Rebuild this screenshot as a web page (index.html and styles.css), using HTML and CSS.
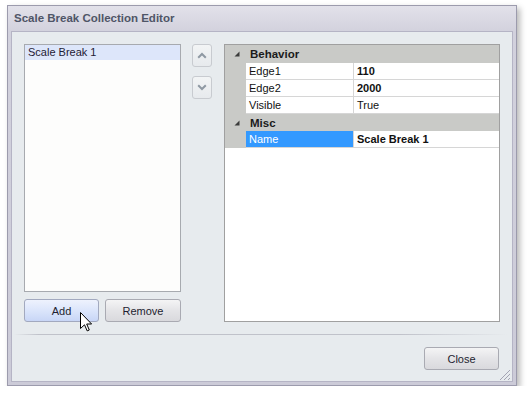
FILE: index.html
```html
<!DOCTYPE html>
<html>
<head>
<meta charset="utf-8">
<link rel="stylesheet" href="styles.css">
</head>
<body>
<div class="window">
  <div class="titlebar">Scale Break Collection Editor</div>
  <div class="client">
    <div class="main">
      <div class="left">
        <div class="list">
          <div class="item selected">Scale Break 1</div>
        </div>
        <div class="btnrow">
          <button class="btn hot add">Add</button>
          <button class="btn remove">Remove</button>
          <svg class="cursor" width="13" height="20" viewBox="0 0 13 20"><path d="M0.5 0.5 V16.5 L4.5 12.8 L7.2 18.9 L9.3 18 L6.7 12 H11.6 Z" fill="#fff" stroke="#000" stroke-width="1" stroke-linejoin="miter"/></svg>
        </div>
      </div>
      <div class="updown">
        <button class="arrow"><svg width="10" height="7" viewBox="0 0 10 7"><polyline points="1.2,5.8 5,2 8.8,5.8" fill="none" stroke="#8f99a3" stroke-width="2"/></svg></button>
        <button class="arrow"><svg width="10" height="7" viewBox="0 0 10 7"><polyline points="1.2,1.2 5,5 8.8,1.2" fill="none" stroke="#8f99a3" stroke-width="2"/></svg></button>
      </div>
      <div class="grid">
        <div class="cat"><span class="tri"><svg width="6" height="6" viewBox="0 0 6 6"><polygon points="0.5,5.5 5.5,5.5 5.5,0.5" fill="#3c3c3c"/></svg></span>Behavior</div>
        <div class="row"><div class="gut"></div><div class="name">Edge1</div><div class="val bold">110</div></div>
        <div class="row"><div class="gut"></div><div class="name">Edge2</div><div class="val bold">2000</div></div>
        <div class="row"><div class="gut"></div><div class="name">Visible</div><div class="val">True</div></div>
        <div class="cat"><span class="tri"><svg width="6" height="6" viewBox="0 0 6 6"><polygon points="0.5,5.5 5.5,5.5 5.5,0.5" fill="#3c3c3c"/></svg></span>Misc</div>
        <div class="row"><div class="gut"></div><div class="name sel">Name</div><div class="val bold">Scale Break 1</div></div>
      </div>
    </div>
    <div class="sep"></div>
    <div class="footer">
      <button class="btn close">Close</button>
    </div>
    <svg class="grip" width="12" height="12" viewBox="0 0 12 12">
      <g stroke="#a3a3b3" stroke-width="1">
        <line x1="11" y1="1" x2="1" y2="11"/>
        <line x1="11" y1="5" x2="5" y2="11"/>
        <line x1="11" y1="9" x2="9" y2="11"/>
      </g>
    </svg>
  </div>
</div>
</body>
</html>
```

FILE: styles.css
```css
body {
  margin: 0;
  background: #ffffff;
  font-family: "Liberation Sans", Arial, sans-serif;
  font-size: 11px;
}

.window {
  position: relative;
  margin: 5px 0 0 7px;
  width: 510px;
  height: 381px;
  box-sizing: border-box;
  border: 1px solid #9c9bad;
  background: linear-gradient(#e2e1ea, #d2d1dd 26px, #cccbd8);
  padding: 0 3px 3px 3px;
  display: flex;
  flex-direction: column;
  box-shadow: 3px 3px 6px rgba(0, 0, 0, 0.28);
}

.titlebar {
  height: 25px;
  line-height: 25px;
  padding-left: 3px;
  font-weight: bold;
  font-size: 11.5px;
  color: #4f5567;
}

.client {
  position: relative;
  flex: 1;
  border: 1px solid #b5b4c5;
  background: #e7ebee;
  padding: 12px 12px 11px 12px;
  display: flex;
  flex-direction: column;
}

.main {
  display: flex;
  height: 278px;
}

.left {
  width: 157px;
  display: flex;
  flex-direction: column;
  gap: 7px;
}

.list {
  height: 248px;
  box-sizing: border-box;
  border: 1px solid #a7aaaf;
  background: #fdfdfc;
}

.item {
  height: 15px;
  line-height: 15px;
  padding-left: 3px;
  color: #1f2035;
}

.item.selected {
  background: #dde6fa;
}

.btnrow {
  position: relative;
  display: flex;
  gap: 6px;
  height: 23px;
}

.btn {
  box-sizing: border-box;
  height: 23px;
  border: 1px solid #a9aab2;
  border-radius: 3px;
  background: linear-gradient(#f4f4f5, #e4e4e7 50%, #d9d9dd);
  font-family: "Liberation Sans", Arial, sans-serif;
  font-size: 11px;
  color: #1e1e30;
  padding: 0;
}

.btn.add {
  width: 75px;
}

.btn.remove {
  width: 76px;
}

.btn.hot {
  background: linear-gradient(#eef2fd, #dbe5fb 50%, #c8d6f6);
  border-color: #a2a9bf;
}

.cursor {
  position: absolute;
  left: 56px;
  top: 13px;
}

.updown {
  width: 20px;
  margin-left: 11px;
  margin-right: 12px;
  display: flex;
  flex-direction: column;
  gap: 9px;
}

.arrow {
  box-sizing: border-box;
  width: 20px;
  height: 23px;
  border: 1px solid #c8cbd0;
  border-radius: 3px;
  background: linear-gradient(#f2f4f5, #e7eaed);
  display: flex;
  align-items: center;
  justify-content: center;
  padding: 0;
}

.grid {
  width: 276px;
  box-sizing: border-box;
  border: 1px solid #a0a0a0;
  background: #ffffff;
}

.cat {
  height: 17px;
  background: #c9cac7;
  display: flex;
  align-items: center;
  font-weight: bold;
  font-size: 11.5px;
  color: #1b1b1b;
}

.cat:first-child {
  height: 18px;
}

.tri {
  width: 25px;
  padding-left: 9px;
  box-sizing: border-box;
  display: flex;
  align-items: center;
}

.row {
  display: flex;
  height: 17px;
}

.gut {
  width: 21px;
  background: #c9cac7;
}

.name,
.val {
  box-sizing: border-box;
  height: 17px;
  line-height: 16px;
  border-bottom: 1px solid #d6d6d6;
  color: #111;
}

.name {
  width: 108px;
  padding-left: 3px;
  border-right: 1px solid #d6d6d6;
}

.name.sel {
  background: #3399ff;
  color: #ffffff;
}

.val {
  flex: 1;
  padding-left: 3px;
}

.bold {
  font-weight: bold;
}

.sep {
  height: 1px;
  margin: 12px -8px 12px -10px;
  background: linear-gradient(to right, rgba(190, 192, 200, 0), #c0c2ca 5%, #c0c2ca 78%, rgba(190, 192, 200, 0));
}

.footer {
  display: flex;
  justify-content: flex-end;
}

.btn.close {
  width: 75px;
  margin-right: 1px;
}

.grip {
  position: absolute;
  right: 1px;
  bottom: 0;
}
```
